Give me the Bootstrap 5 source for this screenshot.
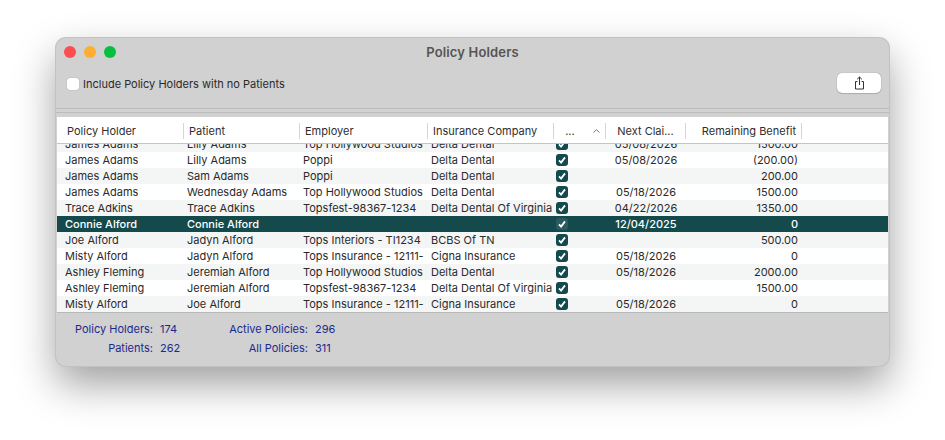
<!DOCTYPE html>
<html lang="en">
<head>
  <meta charset="UTF-8">
  <title>Policy Holders</title>
  <link href="https://cdn.jsdelivr.net/npm/bootstrap@5.3.0/dist/css/bootstrap.min.css" rel="stylesheet">
  <style>
    html, body { height: 100%; overflow: hidden; background: #fff; }
    body { padding: 38px 56px 0; font-family: Inter, "Liberation Sans", sans-serif; font-size: 11px; line-height: 16px; color: #2a2a2a; }

    #win { width: 833px; height: 328px; background: #d1d1d1; border-radius: 10px; overflow: hidden; box-shadow: 0 0 0 1px #c2c2c2, 0 18px 40px rgba(0,0,0,.38); }

    .title-bar { height: 28px; padding-left: 8px; }
    .light { width: 12px; height: 12px; border-radius: 50%; }
    .light-red { background: #fb4f4f; }
    .light-amber { background: #fdae33; }
    .light-green { background: #07bf3f; }
    .win-title { font-size: 13px; font-weight: 600; letter-spacing: .15px; color: #555; left: 0; right: 0; top: 6px; }

    .tool-bar { height: 42px; padding: 0 8px 6px 11px; }
    .fake-check { width: 12px; height: 12px; background: #fff; border-radius: 3px; box-shadow: 0 0 1px rgba(0,0,0,.4); }
    .share-btn { width: 44px; height: 20px; padding: 0; margin-top: -2px; background: #fff; border: 0; border-radius: 5px; box-shadow: 0 0 1px rgba(0,0,0,.45), 0 1px 1px rgba(0,0,0,.15); }
    .split-lines { height: 5px; margin-bottom: 4px; border-top: 1px solid #bcbcbc; border-bottom: 1px solid #bcbcbc; }

    .grid-wrap { margin: 0 1px; height: 196px; background: #fff; border-bottom: 1px solid #b9b9b9; }
    .head-row { height: 27px; padding-top: 1px; border-bottom: 1px solid #c4c4c4; background: #fff; }
    .head-cell { height: 16px; line-height: 16px; border-right: 1px solid #d6d6d6; padding: 0 5px; color: #2e2e2e; white-space: nowrap; }

    .w-a { width: 127px; padding-left: 10px; }
    .w-b { width: 116px; }
    .w-c { width: 128px; }
    .w-d { width: 126px; }
    .w-e { width: 52px; }
    .w-f { width: 80px; }
    .w-g { width: 116px; }

    .sort-up { right: 5px; top: 6px; }

    .body-clip { height: 168px; overflow: hidden; }
    .holders { table-layout: fixed; width: 831px; margin: -8px 0 0; --bs-table-striped-bg: #f4f5f5; --bs-table-striped-color: #2a2a2a; --bs-table-color: #2a2a2a; --bs-table-border-color: transparent; }
    .holders td { height: 16px; padding: 0 0 0 3px; font-size: 11px; line-height: 16px; white-space: nowrap; overflow: hidden; border: 0; }
    .holders td:first-child { padding-left: 8px; }
    .holders td.num { padding: 0 4px 0 0; text-align: right; }
    .holders td.dt { padding: 0; text-align: center; }
    .holders td.ck { padding: 0 0 0 2px; }
    .holders tbody tr.picked > td { --bs-table-accent-bg: #144a4c; background: #144a4c; color: #fff; font-weight: 500; }

    .tick { display: block; width: 12px; height: 12px; margin-top: 2px; border-radius: 3px; background: #144a4c; }
    .picked .tick { background: #2a5c5e; }

    .foot { padding-top: 8px; color: #1a2a8c; display: grid; grid-template-columns: 97px 40px 101px auto; column-gap: 7px; row-gap: 3px; }
    .foot > div { height: 16px; }
  </style>
</head>

<body>
  <div id="win" class="d-flex flex-column">
    <div class="title-bar d-flex align-items-center gap-2 position-relative">
      <span class="light light-red"></span>
      <span class="light light-amber"></span>
      <span class="light light-green"></span>
      <div class="win-title position-absolute text-center">Policy Holders</div>
    </div>

    <div class="tool-bar d-flex align-items-center justify-content-between">
      <label class="d-flex align-items-center gap-1">
        <span class="fake-check"></span>
        <span>Include Policy Holders with no Patients</span>
      </label>
      <button class="share-btn d-flex align-items-center justify-content-center" type="button" aria-label="Share">
        <svg width="11" height="14" viewBox="0 0 11 14" fill="none" stroke="#333" stroke-width="1">
          <path d="M3.5 5.5H1.5V13H9.5V5.5H7.5"/>
          <path d="M5.5 9V1M3.2 3.2L5.5 1L7.8 3.2"/>
        </svg>
      </button>
    </div>

    <div class="split-lines"></div>

    <div class="grid-wrap">
      <div class="head-row d-flex align-items-center">
        <div class="head-cell w-a">Policy Holder</div>
        <div class="head-cell w-b">Patient</div>
        <div class="head-cell w-c">Employer</div>
        <div class="head-cell w-d">Insurance Company</div>
        <div class="head-cell w-e position-relative">&nbsp;&nbsp;...
          <svg class="sort-up position-absolute" width="7" height="4" viewBox="0 0 7 4" fill="none" stroke="#777" stroke-width="1"><path d="M.5 3.5L3.5 .7L6.5 3.5"/></svg>
        </div>
        <div class="head-cell w-f text-center">Next Clai...</div>
        <div class="head-cell w-g text-end">Remaining Benefit</div>
      </div>

      <div class="body-clip">
        <table class="table table-striped table-borderless holders">
          <colgroup>
            <col style="width:127px"><col style="width:116px"><col style="width:128px"><col style="width:126px"><col style="width:52px"><col style="width:80px"><col style="width:116px"><col>
          </colgroup>
          <tbody id="rows"></tbody>
        </table>
      </div>
    </div>

    <div class="foot">
      <div class="text-end">Policy Holders:</div><div>174</div>
      <div class="text-end">Active Policies:</div><div>296</div>
      <div class="text-end">Patients:</div><div>262</div>
      <div class="text-end">All Policies:</div><div>311</div>
    </div>
  </div>

  <script>
    const data = [
      ['James Adams', 'Lilly Adams', 'Top Hollywood Studios', 'Delta Dental', '05/08/2026', '1500.00'],
      ['James Adams', 'Lilly Adams', 'Poppi', 'Delta Dental', '05/08/2026', '(200.00)'],
      ['James Adams', 'Sam Adams', 'Poppi', 'Delta Dental', '', '200.00'],
      ['James Adams', 'Wednesday Adams', 'Top Hollywood Studios', 'Delta Dental', '05/18/2026', '1500.00'],
      ['Trace Adkins', 'Trace Adkins', 'Topsfest-98367-1234', 'Delta Dental Of Virginia', '04/22/2026', '1350.00'],
      ['Connie Alford', 'Connie Alford', '', '', '12/04/2025', '0'],
      ['Joe Alford', 'Jadyn Alford', 'Tops Interiors - TI1234', 'BCBS Of TN', '', '500.00'],
      ['Misty Alford', 'Jadyn Alford', 'Tops Insurance - 12111-', 'Cigna Insurance', '05/18/2026', '0'],
      ['Ashley Fleming', 'Jeremiah Alford', 'Top Hollywood Studios', 'Delta Dental', '05/18/2026', '2000.00'],
      ['Ashley Fleming', 'Jeremiah Alford', 'Topsfest-98367-1234', 'Delta Dental Of Virginia', '', '1500.00'],
      ['Misty Alford', 'Joe Alford', 'Tops Insurance - 12111-', 'Cigna Insurance', '05/18/2026', '0']
    ];
    const tick = '<svg class="tick" viewBox="0 0 12 12" fill="none" stroke="#fff" stroke-width="1.8"><path d="M3 6.3L5.1 8.6L9 3.4"/></svg>';
    document.getElementById('rows').innerHTML = data.map((r) => `
      <tr class="${r[0] === 'Connie Alford' ? 'picked' : ''}">
        <td>${r[0]}</td><td>${r[1]}</td><td>${r[2]}</td><td>${r[3]}</td>
        <td class="ck">${tick}</td><td class="dt">${r[4]}</td><td class="num">${r[5]}</td><td></td>
      </tr>`).join('');
  </script>
</body>
</html>
